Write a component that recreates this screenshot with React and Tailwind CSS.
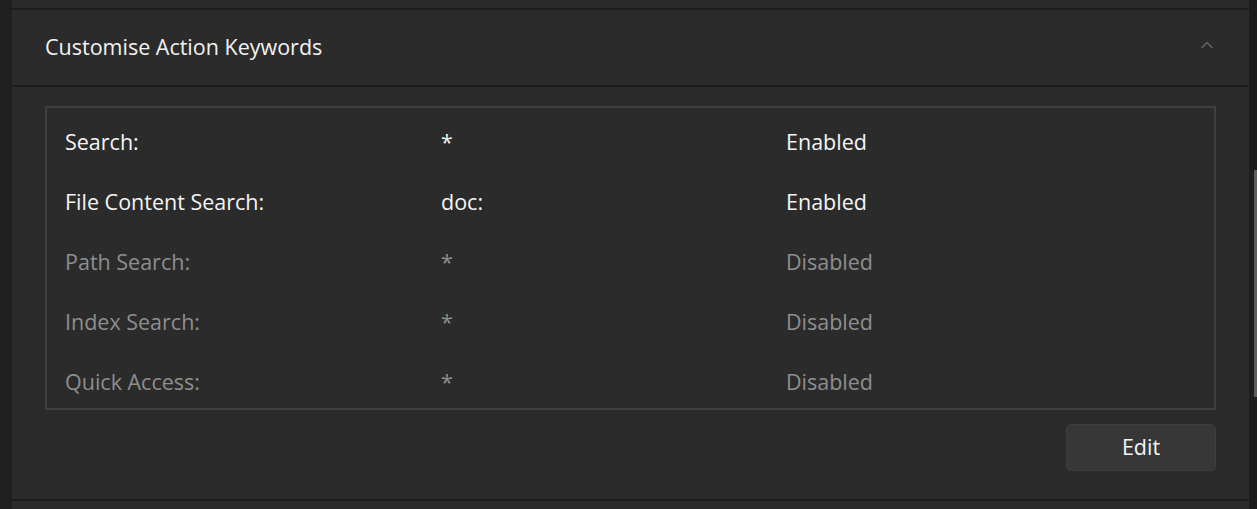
import React from "react";

const rows = [
  { name: "Search:", kw: "*", status: "Enabled", on: true },
  { name: "File Content Search:", kw: "doc:", status: "Enabled", on: true },
  { name: "Path Search:", kw: "*", status: "Disabled", on: false },
  { name: "Index Search:", kw: "*", status: "Disabled", on: false },
  { name: "Quick Access:", kw: "*", status: "Disabled", on: false },
];

export default function App() {
  return (
    <div
      className="flex h-[509px] w-[1257px] overflow-hidden bg-[#202020]"
      style={{ fontFamily: '"Open Sans", "Noto Sans", sans-serif' }}
    >
      <div className="w-[12px] shrink-0 bg-[#202020]" />
      <div className="flex flex-1 flex-col gap-[2px] bg-[#1d1d1d]">
        <div className="h-[8px] bg-[#2b2b2b]" />
        <div className="flex h-[75px] items-center justify-between bg-[#2b2b2b] pl-[33px] pr-[36px]">
          <span className="text-[21.5px] text-[#f2f2f2]">Customise Action Keywords</span>
          <svg width="12" height="8" viewBox="0 0 12 8" className="mt-[-6px]">
            <path d="M0.5 7 L6 1.5 L11.5 7" fill="none" stroke="#6b6b6b" strokeWidth="1.2" />
          </svg>
        </div>
        <div className="flex h-[412px] flex-col bg-[#2b2b2b] px-[33px] pt-[19px]">
          <div className="flex h-[304px] flex-col overflow-hidden border-2 border-[#404040]">
            {rows.map((r) => (
              <div
                key={r.name}
                className={`grid h-[60px] shrink-0 grid-cols-[376px_345px_1fr] items-center pl-[18px] pt-[8px] text-[21.5px] ${
                  r.on ? "text-[#f5f5f5]" : "text-[#8e8e8e]"
                }`}
              >
                <span>{r.name}</span>
                <span>{r.kw}</span>
                <span>{r.status}</span>
              </div>
            ))}
          </div>
          <div className="mt-[14px] flex justify-end">
            <button className="h-[47px] w-[150px] rounded-[5px] border border-[#3d3d3d] bg-[#373737] text-[21.5px] text-[#f5f5f5]">
              Edit
            </button>
          </div>
        </div>
        <div className="h-[8px] bg-[#2b2b2b]" />
      </div>
      <div className="flex w-[8px] shrink-0 flex-col bg-[#1c1c1c]">
        <div className="h-[170px]" />
        <div className="h-[227px] w-[3px] self-end bg-[#5c5c5c]" />
      </div>
    </div>
  );
}
